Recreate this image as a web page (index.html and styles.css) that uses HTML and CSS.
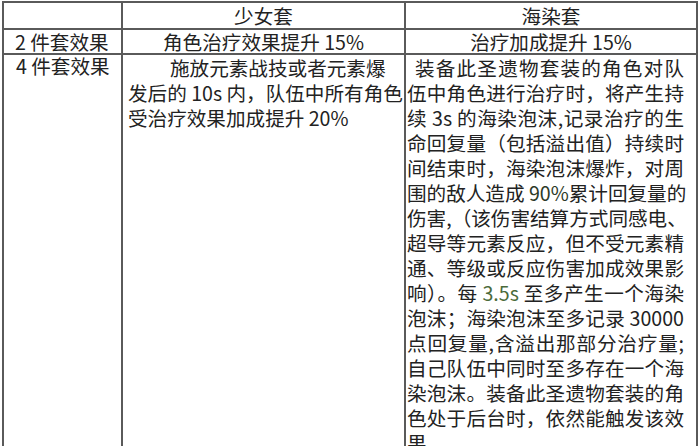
FILE: index.html
```html
<!DOCTYPE html>
<html lang="zh-CN">
<head>
<meta charset="utf-8">
<title>圣遗物套装对比</title>
<link rel="stylesheet" href="styles.css">
</head>
<body>
<div class="sheet">
  <div class="cell head"></div>
  <div class="cell head">少女套</div>
  <div class="cell head">海染套</div>

  <div class="cell label r2">2 件套效果</div>
  <div class="cell center r2">角色治疗效果提升 15%</div>
  <div class="cell center r2">治疗加成提升 15%</div>

  <div class="cell label r3">4 件套效果</div>
  <div class="cell mid r3">
    <span class="line first">施放元素战技或者元素爆</span>
    <span class="line j">发后的 10s 内，队伍中所有角色</span>
    <span class="line">受治疗效果加成提升 20%</span>
  </div>
  <div class="cell right r3">
    <span class="line j first2">装备此圣遗物套装的角色对队</span>
    <span class="line j">伍中角色进行治疗时，将产生持</span>
    <span class="line j">续 3s 的海染泡沫,记录治疗的生</span>
    <span class="line j">命回复量（包括溢出值）持续时</span>
    <span class="line j">间结束时，海染泡沫爆炸，对周</span>
    <span class="line j">围的敌人造成 <span class="num">90%</span>累计回复量的</span>
    <span class="line j">伤害,（该伤害结算方式同感电、</span>
    <span class="line j">超导等元素反应，但不受元素精</span>
    <span class="line j">通、等级或反应伤害加成效果影</span>
    <span class="line j">响）。每 <span class="num g">3.5s</span> 至多产生一个海染</span>
    <span class="line j">泡沫；海染泡沫至多记录 30000</span>
    <span class="line j">点回复量,含溢出那部分治疗量;</span>
    <span class="line j">自己队伍中同时至多存在一个海</span>
    <span class="line j">染泡沫。装备此圣遗物套装的角</span>
    <span class="line j">色处于后台时，依然能触发该效</span>
    <span class="line">果。</span>
  </div>
</div>
</body>
</html>
```

FILE: styles.css
```css
html, body {
  margin: 0;
  padding: 0;
  background: #ffffff;
  overflow: hidden;
  height: 446px;
}

body {
  font-family: "Noto Sans CJK SC", "Noto Sans", sans-serif;
  font-size: 19.6px;
  color: #222222;
}

.sheet {
  margin: 1px 0 0 2px;
  width: 696px;
  box-sizing: border-box;
  display: grid;
  grid-template-columns: 117px 281px 290px;
  grid-template-rows: 25px 23px auto;
  gap: 2px;
  padding: 2px;
  background: #5a5a5a;
}

.cell {
  background: #ffffff;
  box-sizing: border-box;
  white-space: nowrap;
}

.head {
  text-align: center;
  line-height: 25px;
}

.r2 {
  line-height: 23px;
}

.center {
  text-align: center;
}

.label {
  padding-left: 11px;
}

.label.r3 {
  padding-left: 12px;
  line-height: 21px;
  padding-top: 0;
}

.r3 {
  line-height: 25px;
  padding-top: 0;
}

.mid {
  padding: 0 8px 0 5px;
}

.right {
  padding: 0 12px 0 1px;
}

.line {
  display: block;
  white-space: nowrap;
}

.line.j {
  text-align: justify;
  text-align-last: justify;
}

.line.first {
  text-indent: 42px;
}

.line.first2 {
  padding-left: 8px;
}

.num {
  color: #2d3a28;
}

.num.g {
  color: #4a6a3a;
}
```
